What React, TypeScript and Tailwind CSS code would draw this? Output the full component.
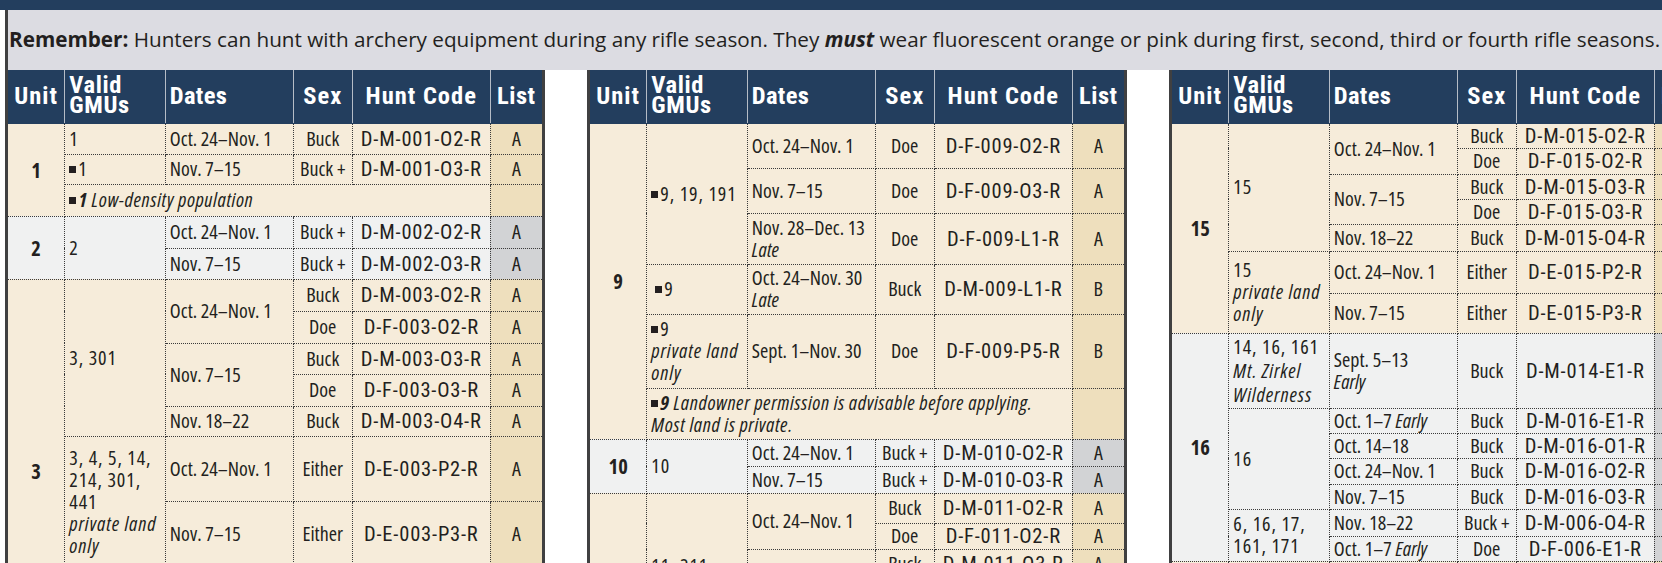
import type { ReactNode } from 'react';

const cell = 'border border-dotted border-[#3b3b3b] py-0 align-middle';

function Sq() {
  return <span className="inline-block w-[7px] h-[7px] bg-[#231f20] mr-[2px] align-[3px]" />;
}

function U({ children, rs, className = '' }: { children: ReactNode; rs?: number; className?: string }) {
  return (
    <td rowSpan={rs} className={`${cell} px-0 text-center font-bold text-[20.5px] ${className}`}>
      {children}
    </td>
  );
}

function G({ children, rs }: { children: ReactNode; rs?: number }) {
  return (
    <td rowSpan={rs} className={`${cell} pl-[4px] pr-0 leading-[22px] tracking-[0.9px] whitespace-nowrap`}>
      {children}
    </td>
  );
}

function D({ children, rs }: { children: ReactNode; rs?: number }) {
  return (
    <td rowSpan={rs} className={`${cell} pl-[4px] pr-0 leading-[22px] whitespace-nowrap`}>
      {children}
    </td>
  );
}

function S({ children }: { children: ReactNode }) {
  return <td className={`${cell} px-0 text-center whitespace-nowrap`}>{children}</td>;
}

function H({ children }: { children: ReactNode }) {
  return (
    <td
      className={`${cell} px-0 text-center whitespace-nowrap font-['Roboto_Condensed',sans-serif] text-[20.5px] tracking-[0.8px]`}
    >
      {children}
    </td>
  );
}

function L({ children, gray }: { children?: ReactNode; gray?: boolean }) {
  return (
    <td className={`${cell} px-0 text-center ${gray ? 'bg-[#d2d3d5]' : 'bg-[#eedfbd]'}`}>{children}</td>
  );
}

function Note({ children }: { children: ReactNode }) {
  return (
    <td colSpan={4} className={`${cell} pl-[4px] pr-0 italic leading-[22px] tracking-[0.6px] whitespace-nowrap`}>
      {children}
    </td>
  );
}

function It({ children }: { children: ReactNode }) {
  return <span className="italic">{children}</span>;
}

const th = 'border-x border-solid border-[#b5bcc6] border-b border-b-[#233e5e] px-0 font-bold align-middle';

function Table({ children }: { children: ReactNode }) {
  return (
    <table className="table-fixed border-collapse w-[540px] border-x-[3px] border-solid border-[#404041] text-[20px] leading-[24px] text-[#231f20] font-stretch-[75%] shrink-0">
      <colgroup>
        <col className="w-[58px]" />
        <col className="w-[100px]" />
        <col className="w-[127px]" />
        <col className="w-[59px]" />
        <col className="w-[137px]" />
        <col className="w-[53px]" />
      </colgroup>
      <thead>
        <tr className="h-[53px] bg-[#233e5e] text-white text-[24.5px] tracking-[1px] font-['Roboto_Condensed',sans-serif]">
          <th className={`${th} text-center`}>Unit</th>
          <th className={`${th} text-left pl-[4px] leading-[20px] pb-[3px] tracking-[0.6px]`}>
            Valid
            <br />
            GMUs
          </th>
          <th className={`${th} text-left pl-[4px] tracking-[0.3px]`}>Dates</th>
          <th className={`${th} text-center`}>Sex</th>
          <th className={`${th} text-center`}>Hunt Code</th>
          <th className={`${th} text-center tracking-[0.5px]`}>List</th>
        </tr>
      </thead>
      <tbody>{children}</tbody>
    </table>
  );
}

const tan = 'bg-[#f6ecda]';
const gry = 'bg-[#f0f1f1]';

export default function App() {
  return (
    <div className="w-[1662px] h-[563px] overflow-hidden bg-white font-['Open_Sans',sans-serif] text-[#231f20]">
      <div className="h-[10px] bg-[#233e5e]" />
      <div className="ml-[5px] h-[60px] border-l-[3px] border-[#404041] bg-[#dcdce2] flex items-center pl-[1px] text-[20.7px] whitespace-nowrap">
        <span>
          <b>Remember:</b> Hunters can hunt with archery equipment during any rifle season. They{' '}
          <b className="italic">must</b> wear fluorescent orange or pink during first, second, third or fourth rifle
          seasons.
        </span>
      </div>

      <div className="flex items-start pl-[5px] gap-[42px]">
        {/* Left column: units 1–3 */}
        <Table>
          <tr className={`h-[31px] ${tan}`}>
            <U rs={3}>1</U>
            <G>1</G>
            <D>Oct. 24–Nov. 1</D>
            <S>Buck</S>
            <H>D-M-001-O2-R</H>
            <L>A</L>
          </tr>
          <tr className={`h-[30px] ${tan}`}>
            <G>
              <Sq />1
            </G>
            <D>Nov. 7–15</D>
            <S>Buck +</S>
            <H>D-M-001-O3-R</H>
            <L>A</L>
          </tr>
          <tr className={`h-[32px] ${tan}`}>
            <Note>
              <Sq />
              <b>1</b> Low-density population
            </Note>
            <L />
          </tr>
          <tr className={`h-[32px] ${gry}`}>
            <U rs={2}>2</U>
            <G rs={2}>2</G>
            <D>Oct. 24–Nov. 1</D>
            <S>Buck +</S>
            <H>D-M-002-O2-R</H>
            <L gray>A</L>
          </tr>
          <tr className={`h-[31px] ${gry}`}>
            <D>Nov. 7–15</D>
            <S>Buck +</S>
            <H>D-M-002-O3-R</H>
            <L gray>A</L>
          </tr>
          <tr className={`h-[32px] ${tan}`}>
            <U rs={7} className="pt-[96px]">
              3
            </U>
            <G rs={5}>3, 301</G>
            <D rs={2}>Oct. 24–Nov. 1</D>
            <S>Buck</S>
            <H>D-M-003-O2-R</H>
            <L>A</L>
          </tr>
          <tr className={`h-[32px] ${tan}`}>
            <S>Doe</S>
            <H>D-F-003-O2-R</H>
            <L>A</L>
          </tr>
          <tr className={`h-[31px] ${tan}`}>
            <D rs={2}>Nov. 7–15</D>
            <S>Buck</S>
            <H>D-M-003-O3-R</H>
            <L>A</L>
          </tr>
          <tr className={`h-[32px] ${tan}`}>
            <S>Doe</S>
            <H>D-F-003-O3-R</H>
            <L>A</L>
          </tr>
          <tr className={`h-[30px] ${tan}`}>
            <D>Nov. 18–22</D>
            <S>Buck</S>
            <H>D-M-003-O4-R</H>
            <L>A</L>
          </tr>
          <tr className={`h-[65px] ${tan}`}>
            <G rs={2}>
              3, 4, 5, 14,
              <br />
              214, 301,
              <br />
              441
              <br />
              <i>private land</i>
              <br />
              <i>only</i>
            </G>
            <D>Oct. 24–Nov. 1</D>
            <S>Either</S>
            <H>D-E-003-P2-R</H>
            <L>A</L>
          </tr>
          <tr className={`h-[66px] ${tan}`}>
            <D>Nov. 7–15</D>
            <S>Either</S>
            <H>D-E-003-P3-R</H>
            <L>A</L>
          </tr>
        </Table>

        {/* Middle column: units 9–11 */}
        <Table>
          <tr className={`h-[45px] ${tan}`}>
            <U rs={6}>9</U>
            <G rs={3}>
              <Sq />
              9, 19, 191
            </G>
            <D>Oct. 24–Nov. 1</D>
            <S>Doe</S>
            <H>D-F-009-O2-R</H>
            <L>A</L>
          </tr>
          <tr className={`h-[45px] ${tan}`}>
            <D>Nov. 7–15</D>
            <S>Doe</S>
            <H>D-F-009-O3-R</H>
            <L>A</L>
          </tr>
          <tr className={`h-[51px] ${tan}`}>
            <D>
              Nov. 28–Dec. 13
              <br />
              <It>Late</It>
            </D>
            <S>Doe</S>
            <H>D-F-009-L1-R</H>
            <L>A</L>
          </tr>
          <tr className={`h-[50px] ${tan}`}>
            <G>
              <span className="pl-[4px]">
                <Sq />9
              </span>
            </G>
            <D>
              Oct. 24–Nov. 30
              <br />
              <It>Late</It>
            </D>
            <S>Buck</S>
            <H>D-M-009-L1-R</H>
            <L>B</L>
          </tr>
          <tr className={`h-[74px] ${tan}`}>
            <G>
              <Sq />9
              <br />
              <i>private land</i>
              <br />
              <i>only</i>
            </G>
            <D>Sept. 1–Nov. 30</D>
            <S>Doe</S>
            <H>D-F-009-P5-R</H>
            <L>B</L>
          </tr>
          <tr className={`h-[51px] ${tan}`}>
            <Note>
              <Sq />
              <b>9</b> Landowner permission is advisable before applying.
              <br />
              Most land is private.
            </Note>
            <L />
          </tr>
          <tr className={`h-[27px] ${gry}`}>
            <U rs={2}>10</U>
            <G rs={2}>10</G>
            <D>Oct. 24–Nov. 1</D>
            <S>Buck +</S>
            <H>D-M-010-O2-R</H>
            <L gray>A</L>
          </tr>
          <tr className={`h-[27px] ${gry}`}>
            <D>Nov. 7–15</D>
            <S>Buck +</S>
            <H>D-M-010-O3-R</H>
            <L gray>A</L>
          </tr>
          <tr className={`h-[30px] ${tan}`}>
            <U rs={5} className="pt-[100px]">
              11
            </U>
            <G rs={5}>11, 211</G>
            <D rs={2}>Oct. 24–Nov. 1</D>
            <S>Buck</S>
            <H>D-M-011-O2-R</H>
            <L>A</L>
          </tr>
          <tr className={`h-[26px] ${tan}`}>
            <S>Doe</S>
            <H>D-F-011-O2-R</H>
            <L>A</L>
          </tr>
          <tr className={`h-[30px] ${tan}`}>
            <D rs={2}>Nov. 7–15</D>
            <S>Buck</S>
            <H>D-M-011-O3-R</H>
            <L>A</L>
          </tr>
          <tr className={`h-[30px] ${tan}`}>
            <S>Doe</S>
            <H>D-F-011-O3-R</H>
            <L>A</L>
          </tr>
          <tr className={`h-[30px] ${tan}`}>
            <D>Nov. 18–22</D>
            <S>Buck</S>
            <H>D-M-011-O4-R</H>
            <L>A</L>
          </tr>
        </Table>

        {/* Right column: units 15–16 */}
        <Table>
          <tr className={`h-[25px] ${tan}`}>
            <U rs={7}>15</U>
            <G rs={5}>15</G>
            <D rs={2}>Oct. 24–Nov. 1</D>
            <S>Buck</S>
            <H>D-M-015-O2-R</H>
            <L>A</L>
          </tr>
          <tr className={`h-[26px] ${tan}`}>
            <S>Doe</S>
            <H>D-F-015-O2-R</H>
            <L>A</L>
          </tr>
          <tr className={`h-[25px] ${tan}`}>
            <D rs={2}>Nov. 7–15</D>
            <S>Buck</S>
            <H>D-M-015-O3-R</H>
            <L>A</L>
          </tr>
          <tr className={`h-[25px] ${tan}`}>
            <S>Doe</S>
            <H>D-F-015-O3-R</H>
            <L>A</L>
          </tr>
          <tr className={`h-[27px] ${tan}`}>
            <D>Nov. 18–22</D>
            <S>Buck</S>
            <H>D-M-015-O4-R</H>
            <L>A</L>
          </tr>
          <tr className={`h-[42px] ${tan}`}>
            <G rs={2}>
              15
              <br />
              <i>private land</i>
              <br />
              <i>only</i>
            </G>
            <D>Oct. 24–Nov. 1</D>
            <S>Either</S>
            <H>D-E-015-P2-R</H>
            <L>B</L>
          </tr>
          <tr className={`h-[40px] ${tan}`}>
            <D>Nov. 7–15</D>
            <S>Either</S>
            <H>D-E-015-P3-R</H>
            <L>B</L>
          </tr>
          <tr className={`h-[75px] ${gry}`}>
            <U rs={7}>16</U>
            <G>
              <span className="leading-[24px]">
                14, 16, 161
                <br />
                <i>Mt. Zirkel</i>
                <br />
                <i>Wilderness</i>
              </span>
            </G>
            <D>
              Sept. 5–13
              <br />
              <It>Early</It>
            </D>
            <S>Buck</S>
            <H>D-M-014-E1-R</H>
            <L gray>A</L>
          </tr>
          <tr className={`h-[25px] ${gry}`}>
            <G rs={4}>16</G>
            <D>
              Oct. 1–7 <It>Early</It>
            </D>
            <S>Buck</S>
            <H>D-M-016-E1-R</H>
            <L gray>A</L>
          </tr>
          <tr className={`h-[25px] ${gry}`}>
            <D>Oct. 14–18</D>
            <S>Buck</S>
            <H>D-M-016-O1-R</H>
            <L gray>A</L>
          </tr>
          <tr className={`h-[26px] ${gry}`}>
            <D>Oct. 24–Nov. 1</D>
            <S>Buck</S>
            <H>D-M-016-O2-R</H>
            <L gray>A</L>
          </tr>
          <tr className={`h-[25px] ${gry}`}>
            <D>Nov. 7–15</D>
            <S>Buck</S>
            <H>D-M-016-O3-R</H>
            <L gray>A</L>
          </tr>
          <tr className={`h-[27px] ${gry}`}>
            <G rs={2}>
              6, 16, 17,
              <br />
              161, 171
            </G>
            <D>Nov. 18–22</D>
            <S>Buck +</S>
            <H>D-M-006-O4-R</H>
            <L gray>A</L>
          </tr>
          <tr className={`h-[23px] ${gry}`}>
            <D>
              Oct. 1–7 <It>Early</It>
            </D>
            <S>Doe</S>
            <H>D-F-006-E1-R</H>
            <L gray>A</L>
          </tr>
          <tr className={`h-[30px] ${tan}`}>
            <U>17</U>
            <G>17</G>
            <D>Oct. 24–Nov. 1</D>
            <S>Buck</S>
            <H>D-M-017-O2-R</H>
            <L>A</L>
          </tr>
        </Table>
      </div>
    </div>
  );
}
